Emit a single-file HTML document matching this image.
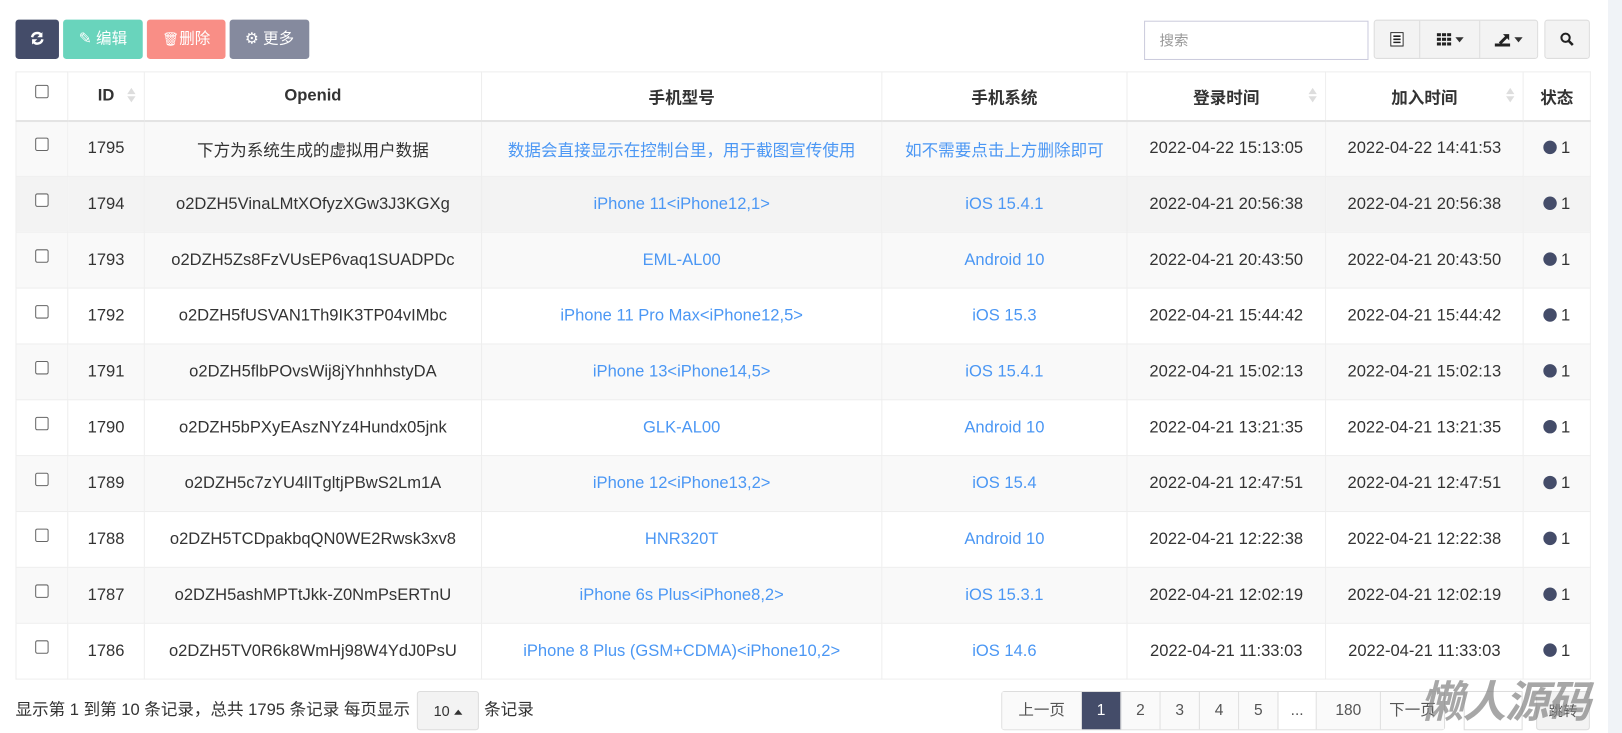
<!DOCTYPE html>
<html><head><meta charset="utf-8"><style>
*{box-sizing:border-box;margin:0;padding:0}
body{width:1622px;height:733px;background:#fff;font-family:"Liberation Sans","Noto Sans CJK SC",sans-serif;font-size:16px;color:#333;position:relative;overflow:hidden}
#w{position:absolute;left:0;top:0;width:1568px;height:709px;transform:scale(1.0344);transform-origin:0 0}
.btn{position:absolute;top:19px;height:38px;border-radius:3px;color:#fff;font-size:15px;line-height:38px;text-align:center}
.side{position:absolute;left:1608px;top:0;width:14px;height:733px;background:#f0f3f7}
table{position:absolute;left:15px;top:69px;border-collapse:collapse;table-layout:fixed;width:1522px}
td,th{border:1px solid #eee;text-align:center;height:54px;padding:0;white-space:nowrap;overflow:hidden}
th{height:47px;font-weight:bold;font-size:16px;border-bottom:2px solid #e4e4e4;position:relative}
tbody tr:nth-child(odd){background:#f9f9f9}
tbody tr.h{background:#f3f3f3}
.b{color:#4b97f4}
.cb{display:inline-block;width:13px;height:13px;border:1px solid #666;border-radius:2px;background:#fff;vertical-align:4px}
.dot{display:inline-block;width:13px;height:13px;border-radius:50%;background:#444c69;vertical-align:-1px;margin-right:4px}
.sort{position:absolute;right:8px;top:15px;width:8px}
.sort:before,.sort:after{content:"";display:block;border-left:4px solid transparent;border-right:4px solid transparent}
.sort:before{border-bottom:6px solid #ddd;margin-bottom:2px}
.sort:after{border-top:6px solid #ddd}
.tb{position:absolute;top:19px;height:38px;border:1px solid #ddd;background:#f3f3f3}
.pg{position:absolute;top:668px;height:38px;display:flex;border:1px solid #ddd;border-radius:3px;left:968px}
.pg span{display:block;border-right:1px solid #ddd;line-height:36px;text-align:center;color:#555;background:#fafafa;font-size:15px}
.pg span.a{background:#444c69;color:#fff}
.car{display:inline-block;border-left:4px solid transparent;border-right:4px solid transparent;border-top:5px solid #333;vertical-align:middle;margin-left:4px}
</style></head><body>
<div class="side"></div>
<div id="w">
<div class="btn" style="left:15px;width:42px;background:#444c69">
<svg width="14" height="14" viewBox="0 0 14 14" style="vertical-align:-2px"><path d="M2 6a5 5 0 0 1 9-2" stroke="#fff" stroke-width="2.4" fill="none"/><path d="M12 1v5H7z" fill="#fff"/><path d="M12 8a5 5 0 0 1-9 2" stroke="#fff" stroke-width="2.4" fill="none"/><path d="M2 13V8h5z" fill="#fff"/></svg></div>
<div class="btn" style="left:61px;width:77px;background:#69d4bc">✎ 编辑</div>
<div class="btn" style="left:142px;width:76px;background:#f98e86"><span style="font-size:13px">🗑</span>删除</div>
<div class="btn" style="left:222px;width:77px;background:#858a9e">⚙ 更多</div>
<div style="position:absolute;left:1106px;top:20px;width:217px;height:38px;border:1px solid #ccd;padding-left:14px;line-height:36px;color:#999;font-size:14px">搜索</div>
<div class="tb" style="left:1328px;width:159px;border-radius:3px;display:flex">
<div style="width:44px;border-right:1px solid #ddd;display:flex;align-items:center;justify-content:center"><svg width="13" height="14"><rect x="0.5" y="0.5" width="12" height="13" fill="#fff" stroke="#222"/><path d="M3 4h7M3 7h7M3 10h7" stroke="#222" stroke-width="1.5"/></svg></div>
<div style="width:58px;border-right:1px solid #ddd;display:flex;align-items:center;justify-content:center"><svg width="14" height="12"><g fill="#222"><rect x="0" y="0" width="4" height="3"/><rect x="5" y="0" width="4" height="3"/><rect x="10" y="0" width="4" height="3"/><rect x="0" y="4.5" width="4" height="3"/><rect x="5" y="4.5" width="4" height="3"/><rect x="10" y="4.5" width="4" height="3"/><rect x="0" y="9" width="4" height="3"/><rect x="5" y="9" width="4" height="3"/><rect x="10" y="9" width="4" height="3"/></g></svg><span class="car"></span></div>
<div style="flex:1;display:flex;align-items:center;justify-content:center"><svg width="15" height="13"><path d="M0 10h15v3H0z" fill="#222"/><path d="M4 9l6-6-2-2h6v6l-2-2-6 6z" fill="#222"/></svg><span class="car"></span></div>
</div>
<div class="tb" style="left:1493px;width:44px;border-radius:3px;display:flex;align-items:center;justify-content:center"><svg width="14" height="14"><circle cx="5.5" cy="5.5" r="4" stroke="#222" stroke-width="2" fill="none"/><path d="M8.5 8.5l4 4" stroke="#222" stroke-width="2.5"/></svg></div>
<table>
<colgroup><col style="width:50px"><col style="width:74px"><col style="width:326px"><col style="width:387px"><col style="width:237px"><col style="width:192px"><col style="width:191px"><col style="width:65px"></colgroup>
<thead><tr><th><span class="cb"></span></th><th>ID<i class="sort"></i></th><th>Openid</th><th>手机型号</th><th>手机系统</th><th>登录时间<i class="sort"></i></th><th>加入时间<i class="sort"></i></th><th>状态</th></tr></thead>
<tbody>
<tr><td><span class="cb"></span></td><td>1795</td><td>下方为系统生成的虚拟用户数据</td><td class="b">数据会直接显示在控制台里，用于截图宣传使用</td><td class="b">如不需要点击上方删除即可</td><td>2022-04-22 15:13:05</td><td>2022-04-22 14:41:53</td><td><span class="dot"></span>1</td></tr>
<tr class="h"><td><span class="cb"></span></td><td>1794</td><td>o2DZH5VinaLMtXOfyzXGw3J3KGXg</td><td class="b">iPhone 11&lt;iPhone12,1&gt;</td><td class="b">iOS 15.4.1</td><td>2022-04-21 20:56:38</td><td>2022-04-21 20:56:38</td><td><span class="dot"></span>1</td></tr>
<tr><td><span class="cb"></span></td><td>1793</td><td>o2DZH5Zs8FzVUsEP6vaq1SUADPDc</td><td class="b">EML-AL00</td><td class="b">Android 10</td><td>2022-04-21 20:43:50</td><td>2022-04-21 20:43:50</td><td><span class="dot"></span>1</td></tr>
<tr><td><span class="cb"></span></td><td>1792</td><td>o2DZH5fUSVAN1Th9IK3TP04vIMbc</td><td class="b">iPhone 11 Pro Max&lt;iPhone12,5&gt;</td><td class="b">iOS 15.3</td><td>2022-04-21 15:44:42</td><td>2022-04-21 15:44:42</td><td><span class="dot"></span>1</td></tr>
<tr><td><span class="cb"></span></td><td>1791</td><td>o2DZH5flbPOvsWij8jYhnhhstyDA</td><td class="b">iPhone 13&lt;iPhone14,5&gt;</td><td class="b">iOS 15.4.1</td><td>2022-04-21 15:02:13</td><td>2022-04-21 15:02:13</td><td><span class="dot"></span>1</td></tr>
<tr><td><span class="cb"></span></td><td>1790</td><td>o2DZH5bPXyEAszNYz4Hundx05jnk</td><td class="b">GLK-AL00</td><td class="b">Android 10</td><td>2022-04-21 13:21:35</td><td>2022-04-21 13:21:35</td><td><span class="dot"></span>1</td></tr>
<tr><td><span class="cb"></span></td><td>1789</td><td>o2DZH5c7zYU4lITgltjPBwS2Lm1A</td><td class="b">iPhone 12&lt;iPhone13,2&gt;</td><td class="b">iOS 15.4</td><td>2022-04-21 12:47:51</td><td>2022-04-21 12:47:51</td><td><span class="dot"></span>1</td></tr>
<tr><td><span class="cb"></span></td><td>1788</td><td>o2DZH5TCDpakbqQN0WE2Rwsk3xv8</td><td class="b">HNR320T</td><td class="b">Android 10</td><td>2022-04-21 12:22:38</td><td>2022-04-21 12:22:38</td><td><span class="dot"></span>1</td></tr>
<tr><td><span class="cb"></span></td><td>1787</td><td>o2DZH5ashMPTtJkk-Z0NmPsERTnU</td><td class="b">iPhone 6s Plus&lt;iPhone8,2&gt;</td><td class="b">iOS 15.3.1</td><td>2022-04-21 12:02:19</td><td>2022-04-21 12:02:19</td><td><span class="dot"></span>1</td></tr>
<tr><td><span class="cb"></span></td><td>1786</td><td>o2DZH5TV0R6k8WmHj98W4YdJ0PsU</td><td class="b">iPhone 8 Plus (GSM+CDMA)&lt;iPhone10,2&gt;</td><td class="b">iOS 14.6</td><td>2022-04-21 11:33:03</td><td>2022-04-21 11:33:03</td><td><span class="dot"></span>1</td></tr>
</tbody></table>
<div style="position:absolute;left:15px;top:677px;line-height:20px">显示第 1 到第 10 条记录，总共 1795 条记录 每页显示</div>
<div style="position:absolute;left:403px;top:668px;width:60px;height:38px;border:1px solid #ddd;border-radius:3px;background:#f3f3f3;line-height:36px;text-align:center;font-size:14px">10<span class="car" style="border-top:0;border-bottom:5px solid #333"></span></div>
<div style="position:absolute;left:468px;top:677px;line-height:20px">条记录</div>
<div class="pg"><span style="width:77px">上一页</span><span class="a" style="width:38px">1</span><span style="width:38px">2</span><span style="width:38px">3</span><span style="width:38px">4</span><span style="width:38px">5</span><span style="width:37px;background:#fff">...</span><span style="width:62px">180</span><span style="width:61px;border-right:0">下一页</span></div>
<div style="position:absolute;left:1415px;top:668px;width:57px;height:38px;border:1px solid #ddd;background:#fff"></div>
<div style="position:absolute;left:1485px;top:668px;width:52px;height:38px;border:1px solid #ddd;border-radius:3px;background:#f3f3f3;line-height:36px;text-align:center;color:#555;font-size:14px">跳转</div>
<div style="position:absolute;left:1373px;top:645px;font-size:42px;font-weight:bold;font-style:italic;color:rgba(130,130,130,0.7);letter-spacing:-1px">懒人源码</div>
</div>
</body></html>
